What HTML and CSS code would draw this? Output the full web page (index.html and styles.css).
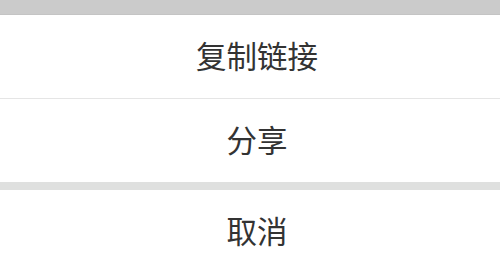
FILE: index.html
```html
<!DOCTYPE html>
<html lang="zh-CN">

<head>
  <meta charset="UTF-8" />
  <meta name="viewport" content="width=device-width, initial-scale=1" />
  <title>分享</title>
  <link rel="stylesheet" href="styles.css">
</head>

<body>
  <div class="mask"></div>

  <div class="sheet">
    <div class="sheet-group">
      <a class="sheet-item" href="#">复制链接</a>
      <a class="sheet-item" href="#">分享</a>
    </div>
    <div class="sheet-group">
      <a class="sheet-item" href="#">取消</a>
    </div>
  </div>
</body>

</html>
```

FILE: styles.css
```css
* {
  box-sizing: border-box;
  margin: 0;
  padding: 0;
}

body {
  font-family: "Noto Sans CJK SC", "Liberation Sans", sans-serif;
  background-color: #dfe0df;
  color: #333;
}

.mask {
  height: 15px;
  background-color: #cbcbcb;
  border-bottom: 1px solid #c4c4c4;
}

.sheet {
  display: flex;
  flex-direction: column;
  gap: 8px;
}

.sheet-group {
  background-color: #fff;
}

.sheet-item {
  display: flex;
  justify-content: center;
  align-items: center;
  height: 83px;
  padding: 0 0 4px 14px;
  font-size: 30.5px;
  color: #333;
  text-decoration: none;
}

.sheet-item + .sheet-item {
  border-top: 1px solid #e5e5e5;
  height: 84px;
}
```
